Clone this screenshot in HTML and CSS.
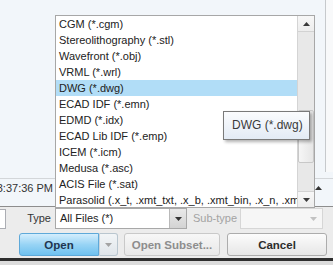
FILE: index.html
```html
<!DOCTYPE html>
<html lang="en">
<head>
  <meta charset="UTF-8" />
  <meta name="viewport" content="width=device-width, initial-scale=1.0" />
  <title>Open File</title>
  <link rel="stylesheet" href="styles.css">
</head>
<body>
  <div class="dialog">
    <div class="files">
      <div class="vscroll"></div>
      <div class="row-sel">
        <span class="date">4/12/2016 03:37:36 PM</span>
        <svg class="sort" width="7" height="4" viewBox="0 0 7 4"><polygon points="0,4 7,4 3.5,0" fill="#333"/></svg>
      </div>
    </div>

    <div class="panel">
      <div class="fields">
        <div class="fname"></div>
        <label class="lbl">Type</label>
        <div class="combo type">
          <span class="value">All Files (*)</span>
          <span class="drop"><svg width="7" height="4" viewBox="0 0 7 4"><polygon points="0,0 7,0 3.5,4" fill="#333"/></svg></span>
        </div>
        <label class="lbl sub">Sub-type</label>
        <div class="combo off">
          <span class="value"></span>
          <span class="drop"><svg width="7" height="4" viewBox="0 0 7 4"><polygon points="0,0 7,0 3.5,4" fill="#c2c2c2"/></svg></span>
        </div>
      </div>
      <div class="buttons">
        <div class="split">
          <button class="btn primary">Open</button>
          <button class="btn arrow"><svg width="7" height="4" viewBox="0 0 7 4"><polygon points="0,0 7,0 3.5,4" fill="#a3a3a3"/></svg></button>
        </div>
        <button class="btn subset" disabled>Open Subset...</button>
        <button class="btn cancel">Cancel</button>
      </div>
      <div class="edge"></div>
    </div>

    <ul class="list">
      <li>CGM (*.cgm)</li>
      <li>Stereolithography (*.stl)</li>
      <li>Wavefront (*.obj)</li>
      <li>VRML (*.wrl)</li>
      <li class="hover">DWG (*.dwg)</li>
      <li>ECAD IDF (*.emn)</li>
      <li>EDMD (*.idx)</li>
      <li>ECAD Lib IDF (*.emp)</li>
      <li>ICEM (*.icm)</li>
      <li>Medusa (*.asc)</li>
      <li>ACIS File (*.sat)</li>
      <li>Parasolid (.x_t, .xmt_txt, .x_b, .xmt_bin, .x_n, .xmt_neu)</li>
      <div class="scrollbar">
        <div class="sb-btn"><svg width="7" height="4" viewBox="0 0 7 4"><polygon points="0,4 7,4 3.5,0" fill="#3a3a3a"/></svg></div>
        <div class="thumb"><span class="grip"></span></div>
        <div class="sb-btn down"><svg width="7" height="4" viewBox="0 0 7 4"><polygon points="0,0 7,0 3.5,4" fill="#3a3a3a"/></svg></div>
      </div>
    </ul>

    <div class="tip">DWG (*.dwg)</div>
  </div>
</body>
</html>
```

FILE: styles.css
```css
* {
  box-sizing: border-box;
}
body {
  margin: 0;
  font-family: "Liberation Sans", Arial, sans-serif;
  background: #dedede;
}
.dialog {
  position: relative;
  width: 333px;
  height: 265px;
  overflow: hidden;
  background: #dcdcdc;
}

/* file list behind the popup */
.files {
  height: 206px;
  background: #f2f6fa;
  display: grid;
  grid-template-columns: 1fr 8px;
  grid-template-rows: 172px 6px 18px 1fr;
}
.vscroll {
  grid-column: 2;
  grid-row: 1;
  border-left: 1px solid #c6c9cc;
  background: #f8f9fa;
}
.row-sel {
  grid-column: 1 / 3;
  grid-row: 3;
  display: flex;
  align-items: center;
  justify-content: space-between;
  border-top: 1px solid #d3d6d9;
  font-size: 11px;
  color: #333;
}
.date {
  width: 53px;
  display: flex;
  justify-content: flex-end;
  white-space: nowrap;
}
.sort {
  margin-right: 11px;
}

/* bottom panel */
.panel {
  border-top: 1px solid #8d8d8d;
  background: #ececec;
  padding-top: 1px;
}
.fields {
  display: flex;
  height: 21px;
}
.fname {
  width: 6px;
  margin-top: 1px;
  height: 20px;
  background: #fff;
  border: 1px solid #abadb3;
  border-left: 0;
}
.lbl {
  width: 49px;
  text-align: right;
  padding-right: 4px;
  font-size: 11px;
  line-height: 21px;
  color: #333;
}
.lbl.sub {
  width: 53px;
  text-align: left;
  padding: 0 0 0 6px;
  color: #a3a3a3;
}
.combo {
  display: flex;
  width: 132px;
  border: 1px solid #a8a8a8;
  background: #fff;
  font-size: 11px;
  color: #222;
}
.combo .value {
  flex: 1;
  padding-left: 4px;
  line-height: 19px;
}
.combo .drop {
  width: 17px;
  display: flex;
  align-items: center;
  justify-content: center;
  border-left: 1px solid #b9b9b9;
  background: linear-gradient(#e9e9e9, #d3d3d3);
}
.combo.off {
  width: 83px;
  border-color: #d6d6d6;
  background: #f6f6f6;
}
.combo.off .drop {
  border-left: 0;
  background: none;
}

.buttons {
  display: flex;
  margin-top: 4px;
  padding-left: 19px;
  height: 23px;
}
.split {
  display: flex;
}
.btn {
  height: 23px;
  margin: 0;
  padding: 0;
  font-family: "Liberation Sans", Arial, sans-serif;
  font-weight: bold;
  font-size: 11.5px;
  color: #2c2c2c;
  border: 1px solid #acacac;
  border-radius: 3px;
  background: linear-gradient(#fcfcfc, #e6e6e6);
}
.primary {
  width: 80px;
  color: #1f3550;
  border-color: #5ea9d9;
  border-radius: 3px 0 0 3px;
  background: linear-gradient(#d4eefd, #98d4f5 50%, #6fc1ef);
}
.arrow {
  width: 19px;
  display: flex;
  align-items: center;
  justify-content: center;
  border-color: #b9c6cf;
  border-left: 1px solid #c9d4dc;
  border-radius: 0 3px 3px 0;
  background: linear-gradient(#f2f5f7, #dfe5ea);
}
.subset {
  width: 96px;
  margin-left: 6px;
  color: #8d8d8d;
  border-color: #c9c9c9;
  background: linear-gradient(#f7f7f7, #e8e8e8);
}
.cancel {
  width: 100px;
  margin-left: 7px;
}
.edge {
  margin-top: 2px;
  height: 3px;
  background: #2e2e2e;
}

/* popup list of types */
.list {
  position: absolute;
  left: 55px;
  top: 15px;
  width: 260px;
  height: 193px;
  margin: 0;
  padding: 0;
  list-style: none;
  overflow: hidden;
  border: 1px solid #a7a7a7;
  background: #fff;
  font-size: 11px;
  color: #222;
}
.list li {
  width: 241px;
  height: 16px;
  line-height: 16px;
  padding-left: 3px;
  white-space: nowrap;
  overflow: hidden;
}
.list li.hover {
  background: #b1ddf7;
}
.scrollbar {
  position: absolute;
  top: 0;
  right: 0;
  bottom: 0;
  width: 17px;
  display: flex;
  flex-direction: column;
  background: #e8e8e8;
  border-left: 1px solid #d4d4d4;
}
.sb-btn {
  height: 16px;
  display: flex;
  align-items: center;
  justify-content: center;
  background: linear-gradient(#f7f7f7, #ededed);
  border-bottom: 1px solid #d2d2d2;
}
.sb-btn.down {
  margin-top: auto;
  border-bottom: 0;
  border-top: 1px solid #d2d2d2;
}
.thumb {
  margin-top: 78px;
  height: 53px;
  display: flex;
  align-items: center;
  justify-content: center;
  border: 1px solid #c8c8c8;
  border-radius: 2px;
  background: linear-gradient(90deg, #f6f6f6, #e6e6e6);
}
.grip {
  width: 7px;
  height: 5px;
  border-top: 1px solid #b5b5b5;
  border-bottom: 1px solid #b5b5b5;
}

.tip {
  position: absolute;
  left: 223px;
  top: 111px;
  width: 87px;
  height: 29px;
  padding-left: 8px;
  line-height: 27px;
  font-size: 12px;
  color: #3a3a3a;
  border: 1px solid #7a7a7a;
  background: linear-gradient(#fbfcfe, #e3ebf5);
  box-shadow: 2px 2px 3px rgba(0, 0, 0, 0.3);
}
```
